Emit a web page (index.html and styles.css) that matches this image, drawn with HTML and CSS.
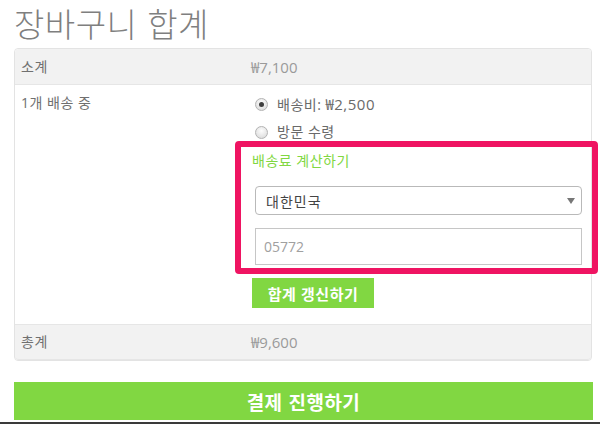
FILE: index.html
```html
<!DOCTYPE html>
<html lang="ko">
<head>
<meta charset="utf-8">
<title>장바구니 합계</title>
<link rel="stylesheet" href="styles.css">
</head>
<body>
<div class="page">
  <h1 class="title">장바구니 합계</h1>
  <div class="totals">
    <div class="row row-shade">
      <div class="label">소계</div>
      <div class="value amount">₩7,100</div>
    </div>
    <div class="row row-shipping">
      <div class="label label-top">1개 배송 중</div>
      <div class="value">
        <ul class="methods">
          <li class="method"><input class="radio" type="radio" name="ship" checked><span>배송비: <span class="price">₩2,500</span></span></li>
          <li class="method"><input class="radio" type="radio" name="ship"><span>방문 수령</span></li>
        </ul>
        <div class="calc">
          <a class="calc-link" href="#">배송료 계산하기</a>
          <div class="select-wrap">
            <select class="select"><option>대한민국</option></select>
            <span class="arrow"></span>
          </div>
          <input class="postcode" type="text" value="05772">
          <button class="btn-update" type="button">합계 갱신하기</button>
        </div>
      </div>
    </div>
    <div class="row row-shade row-total">
      <div class="label">총계</div>
      <div class="value amount">₩9,600</div>
    </div>
    <div class="highlight"></div>
  </div>
  <button class="btn-checkout" type="button">결제 진행하기</button>
</div>
<div class="edge"></div>
</body>
</html>
```

FILE: styles.css
```css
html, body {
  margin: 0;
  padding: 0;
  background: #fff;
}
body {
  font-family: "Open Sans", "Noto Sans CJK KR", sans-serif;
  font-size: 14px;
  color: #6d6d6d;
}
.page {
  padding: 0 7px 0 14px;
}
.title {
  margin: 0 0 2px;
  font-family: "Noto Sans CJK KR", sans-serif;
  font-size: 33px;
  line-height: 46px;
  font-weight: 300;
  color: #7f7f7f;
  letter-spacing: 0.5px;
}
.totals {
  position: relative;
  border: 1px solid #e3e3e3;
  border-radius: 4px;
  margin-right: 1px;
}
.row {
  display: grid;
  grid-template-columns: 230px 1fr;
  border-bottom: 1px solid #e6e6e6;
}
.row:last-of-type {
  border-bottom: 0;
}
.row-shade {
  background: #f2f2f2;
  height: 35px;
  align-items: center;
}
.row-shade:first-child {
  border-radius: 4px 4px 0 0;
}
.row-total {
  height: 34px;
  border-radius: 0 0 4px 4px;
}
.label {
  padding: 0 6px;
  color: #707070;
  line-height: 20px;
  letter-spacing: 0.5px;
}
.label-top {
  padding-top: 8px;
}
.value {
  padding: 0 6px;
  line-height: 20px;
}
.amount {
  color: #9a9a9a;
  font-size: 15px;
}
.price {
  font-size: 15px;
}
.row-shipping {
  padding-bottom: 16px;
}
.methods {
  list-style: none;
  margin: 0;
  padding: 5px 0 0;
}
.method {
  height: 28px;
  display: flex;
  align-items: center;
  gap: 9px;
  color: #6a6a6a;
  letter-spacing: 0.5px;
}
.radio {
  appearance: none;
  -webkit-appearance: none;
  margin: 0 0 0 4px;
  width: 13px;
  height: 13px;
  border-radius: 50%;
  border: 1px solid #b3b3b3;
  background: radial-gradient(circle at 50% 35%, #fdfdfd 0%, #d6d6d6 100%);
  position: relative;
  flex: none;
}
.radio:checked::after {
  content: "";
  position: absolute;
  left: 3px;
  top: 3px;
  width: 5px;
  height: 5px;
  border-radius: 50%;
  background: #3e3e3e;
}
.calc {
  padding-top: 5px;
}
.calc-link {
  display: block;
  color: #81d742;
  text-decoration: none;
  line-height: 20px;
  margin-left: 1px;
  letter-spacing: 0.5px;
}
.select-wrap {
  position: relative;
  margin: 15px 3px 0 4px;
}
.select {
  appearance: none;
  -webkit-appearance: none;
  display: block;
  width: 100%;
  height: 29px;
  border: 1px solid #b9b9b9;
  border-radius: 4px;
  background: #fff;
  padding: 0 10px;
  font-family: "Noto Sans CJK KR", sans-serif;
  font-size: 14px;
  color: #444;
  letter-spacing: 1px;
}
.arrow {
  position: absolute;
  right: 7px;
  top: 12px;
  width: 0;
  height: 0;
  border-left: 4px solid transparent;
  border-right: 4px solid transparent;
  border-top: 6px solid #777;
}
.postcode {
  display: block;
  box-sizing: border-box;
  width: calc(100% - 7px);
  margin: 13px 3px 0 4px;
  height: 37px;
  border: 1px solid #c6c6c6;
  border-radius: 0;
  padding: 0 8px;
  font-family: "Open Sans", sans-serif;
  font-size: 14px;
  color: #a0a0a0;
  background: #fff;
}
.btn-update {
  display: block;
  margin: 13px 0 0 1px;
  height: 30px;
  width: 122px;
  border: 0;
  background: #81d742;
  color: #fff;
  font-family: "Noto Sans CJK KR", sans-serif;
  font-weight: 700;
  font-size: 15px;
  letter-spacing: 0.5px;
  padding: 0;
}
.highlight {
  position: absolute;
  left: 220px;
  top: 92px;
  width: 351px;
  height: 121px;
  border: 6px solid #ef1462;
  border-radius: 4px;
  pointer-events: none;
}
.btn-checkout {
  display: block;
  width: 100%;
  margin-top: 21px;
  height: 38px;
  border: 0;
  background: #81d742;
  color: #fff;
  font-family: "Noto Sans CJK KR", sans-serif;
  font-weight: 700;
  font-size: 19px;
  letter-spacing: 0.5px;
  padding: 0;
}
.edge {
  margin-top: 2px;
  height: 2px;
  background: #3a3a3a;
}
```
